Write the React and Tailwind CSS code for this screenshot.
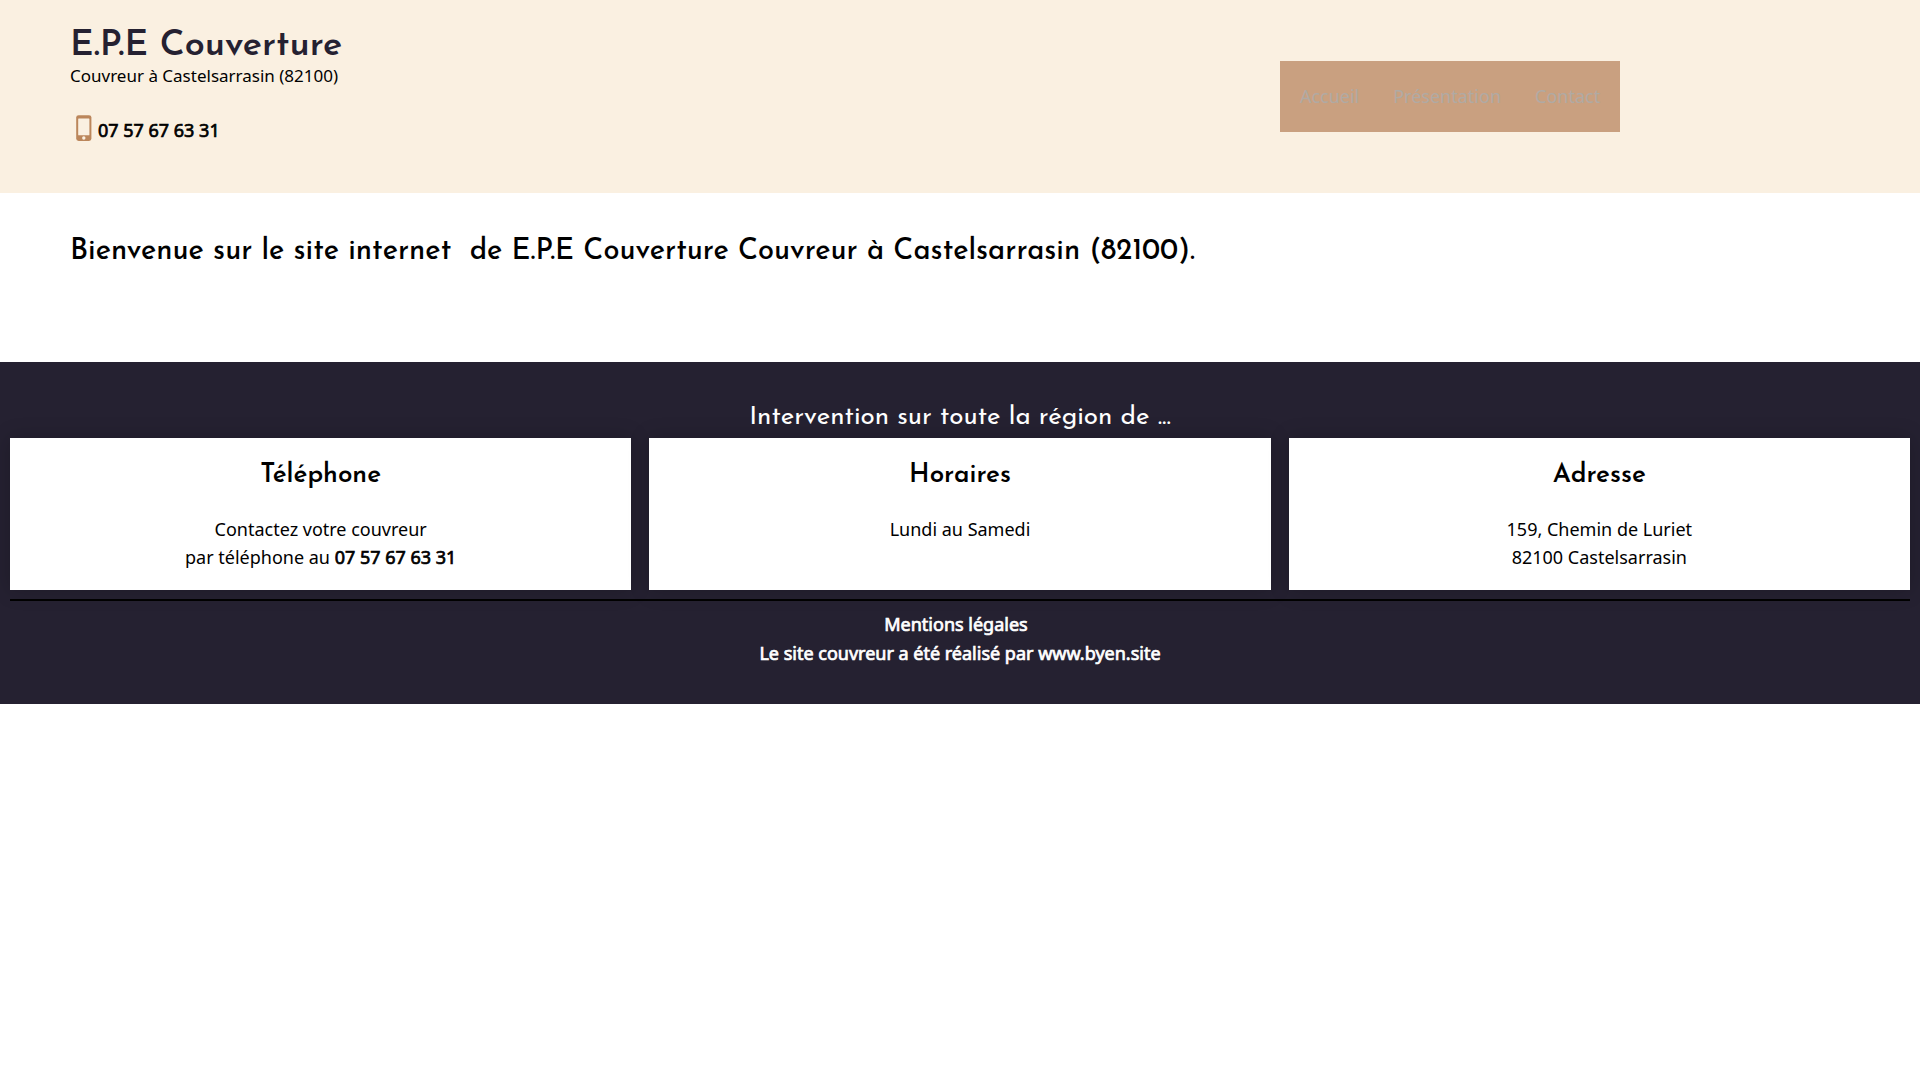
import React from 'react';

const phone = '07 57 67 63 31';

const links = [
  { label: 'Accueil', href: '#accueil' },
  { label: 'Présentation', href: '#presentation' },
  { label: 'Contact', href: '#contact' },
];

function MobileIcon() {
  return (
    <svg width="16" height="26" viewBox="0 0 16 26" aria-hidden="true">
      <rect x="0.2" y="0.2" width="15.2" height="25.8" rx="2.4" fill="#bb865b" />
      <rect x="2.2" y="3.4" width="11.2" height="16.8" rx="0.5" fill="#faf0e1" />
      <circle cx="7.8" cy="23" r="1.7" fill="#faf0e1" />
    </svg>
  );
}

function Header() {
  return (
    <header className="grid grid-cols-2 gap-10 bg-[#faf0e1] pt-[26px] pb-[47px]">
      <div className="pl-[70px]">
        <p className="font-['Josefin_Sans',Lato,sans-serif] text-4xl leading-10 font-semibold text-[#252131]">
          E.P.E Couverture
        </p>
        <p className="text-[17px] leading-5">Couvreur à Castelsarrasin (82100)</p>
        <a href="tel:0757676331" className="mt-6 flex items-center gap-1.5 pl-1.5 text-lg leading-9">
          <MobileIcon />
          <span className="pt-1 leading-8 [-webkit-text-stroke:0.04em]">{phone}</span>
        </a>
      </div>
      <nav className="mt-[35px] flex items-center gap-[34px] self-start justify-self-center bg-[#c9a080] px-5 py-[21px] text-lg leading-[29px] text-[#b0aaa4]">
        {links.map((link) => (
          <a key={link.label} href={link.href}>{link.label}</a>
        ))}
      </nav>
    </header>
  );
}

function Card({ title, children }) {
  return (
    <section className="bg-white px-5 pt-[22px] pb-[19px] text-lg leading-7 text-black shadow-[0_0_20px_rgba(0,0,0,0.2)]">
      <h3 className="mb-[23px] font-['Josefin_Sans',Lato,sans-serif] text-[26px] leading-8 font-semibold">{title}</h3>
      {children}
    </section>
  );
}

export default function App() {
  return (
    <div className="bg-white font-['Noto_Sans',sans-serif] text-black">
      <Header />

      <main className="px-[70px] pt-[41px] pb-[92px]">
        <h1 className="font-['Josefin_Sans',Lato,sans-serif] text-[29px] leading-9 font-[550]">
          Bienvenue sur le site internet &nbsp;de E.P.E Couverture Couvreur à Castelsarrasin (82100).
        </h1>
      </main>

      <footer className="bg-[#252131] px-2.5 pt-10 pb-9 text-center text-white">
        <h2 className="mb-1 font-['Josefin_Sans',Lato,sans-serif] text-[26px] leading-8">
          Intervention sur toute la région de ...
        </h2>
        <div className="grid grid-cols-3 gap-[18px]">
          <Card title="Téléphone">
            <p>Contactez votre couvreur</p>
            <p>par téléphone au <a href="tel:0757676331" className="[-webkit-text-stroke:0.04em]">{phone}</a></p>
          </Card>
          <Card title="Horaires">
            <p>Lundi au Samedi</p>
          </Card>
          <Card title="Adresse">
            <p>159, Chemin de Luriet</p>
            <p>82100 Castelsarrasin</p>
          </Card>
        </div>
        <hr className="my-[9px] border-t-2 border-black" />
        <div className="flex flex-col items-center text-lg leading-[29px] [-webkit-text-stroke:0.04em]">
          <a href="#mentions" className="pr-2">Mentions légales</a>
          <a href="#byen">Le site couvreur a été réalisé par www.byen.site</a>
        </div>
      </footer>
    </div>
  );
}
